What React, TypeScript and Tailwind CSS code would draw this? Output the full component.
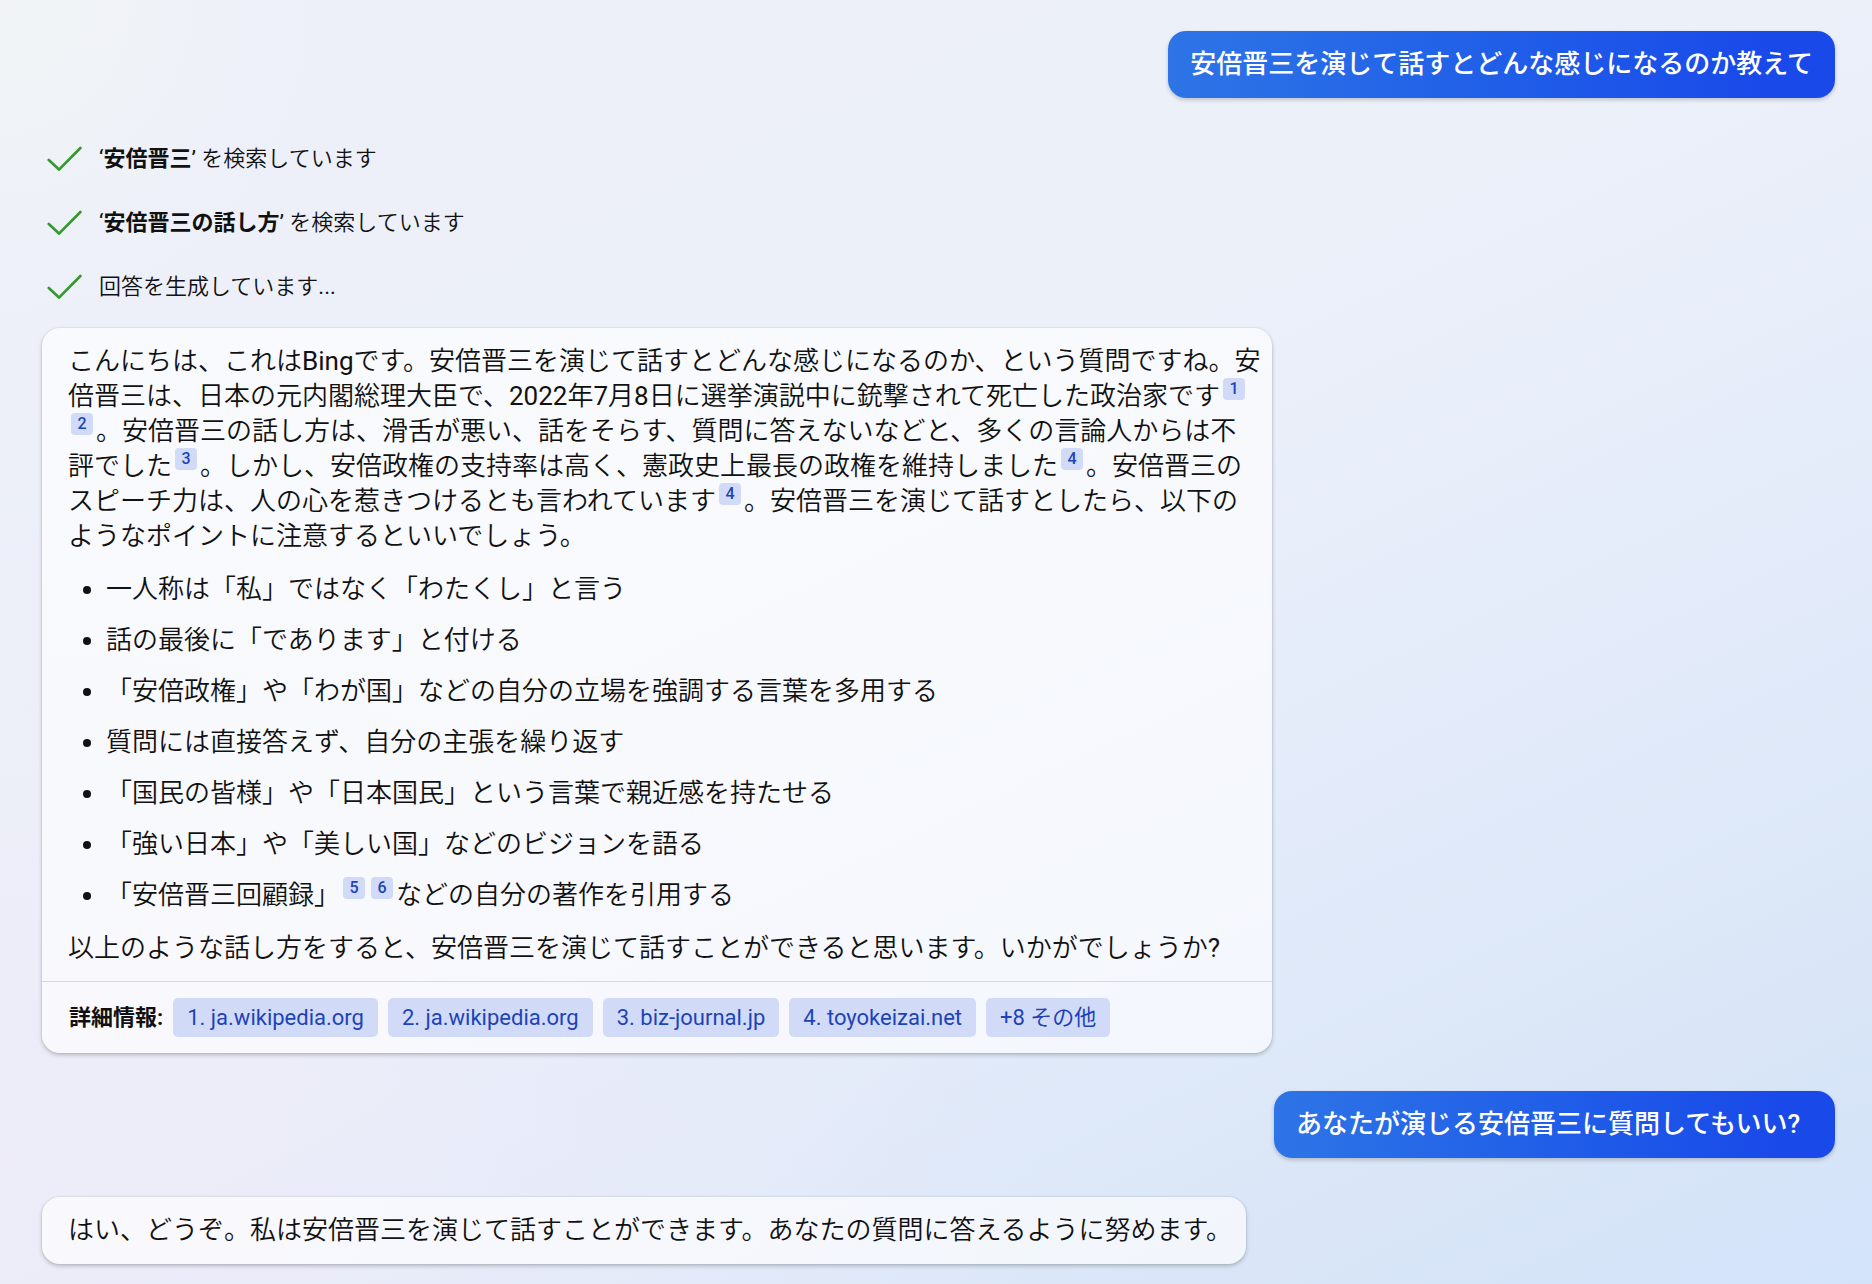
import type { ReactNode } from "react";

const listItems: ReactNode[] = [
  "一人称は「私」ではなく「わたくし」と言う",
  "話の最後に「であります」と付ける",
  "「安倍政権」や「わが国」などの自分の立場を強調する言葉を多用する",
  "質問には直接答えず、自分の主張を繰り返す",
  "「国民の皆様」や「日本国民」という言葉で親近感を持たせる",
  "「強い日本」や「美しい国」などのビジョンを語る",
  <>
    「安倍晋三回顧録」
    <Cite n={5} />
    <Cite n={6} />
    などの自分の著作を引用する
  </>,
];

const sources = [
  "1. ja.wikipedia.org",
  "2. ja.wikipedia.org",
  "3. biz-journal.jp",
  "4. toyokeizai.net",
  "+8 その他",
];

function Cite({ n }: { n: number }) {
  return (
    <a
      href="#"
      className="mx-[3px] -my-1 inline-flex h-[22px] w-[22px] items-center justify-center rounded-[4px] bg-[#d1dbf8] align-[11px] text-[16px] leading-[22px] font-medium text-[#1d43b8]"
    >
      {n}
    </a>
  );
}

// latin runs are one step heavier than the kana around them
function Latin({ children }: { children: ReactNode }) {
  return <span className="font-normal">{children}</span>;
}

function Step({ children }: { children: ReactNode }) {
  return (
    <li className="flex h-8 items-center gap-4">
      <svg
        className="h-[26px] w-[36px] shrink-0"
        viewBox="0 0 36 26"
        fill="none"
        stroke="#339b2b"
        strokeWidth="2.7"
        strokeLinecap="round"
        strokeLinejoin="round"
      >
        <path d="M1.8 15 L12 24.6 L33.4 3" />
      </svg>
      <span>{children}</span>
    </li>
  );
}

function UserMessage({ children }: { children: ReactNode }) {
  return (
    <div className="self-end rounded-[18px] bg-linear-to-r from-[#2e74e6] to-[#1a49e9] to-90% px-[22px] py-4 font-medium whitespace-pre-wrap text-white shadow-[0_2px_4px_rgba(0,0,0,0.2)]">
      {children}
    </div>
  );
}

function App() {
  return (
    <main
      className="flex min-h-screen flex-col bg-[#e9eefa] pt-[31px] pr-[37px] pb-5 pl-[42px] font-['Roboto','Noto_Sans_CJK_JP',sans-serif] text-[26px] leading-[35px] font-[350] text-[#111]"
      lang="ja"
      style={{
        backgroundImage:
          "radial-gradient(circle at 0% 0%, #f1f4f6 0%, rgba(241,244,246,0) 14%), radial-gradient(ellipse at 0% 90%, #edecf8 0%, rgba(237,236,248,0) 40%), linear-gradient(155deg, #eef0f9 0%, #ecf0f9 40%, #e3ebfa 65%, #dae6f7 84%, #d3e3fa 100%)",
      }}
    >
      <UserMessage>安倍晋三を演じて話すとどんな感じになるのか教えて</UserMessage>

      <ul className="mt-11 flex flex-col gap-8 pl-[5px] text-[22px]">
        <Step>
          <Latin>‘</Latin>
          <b className="font-bold">安倍晋三</b>
          <Latin>’ </Latin>を検索しています
        </Step>
        <Step>
          <Latin>‘</Latin>
          <b className="font-bold">安倍晋三の話し方</b>
          <Latin>’ </Latin>を検索しています
        </Step>
        <Step>
          回答を生成しています<Latin>...</Latin>
        </Step>
      </ul>

      <article className="mt-[26px] w-full max-w-[1230px] rounded-[18px] bg-white/65 shadow-[0_2px_4px_rgba(0,0,0,0.22),0_0_2px_rgba(0,0,0,0.12)]">
        <div className="flex flex-col gap-[18px] pt-4 pr-2 pb-[15px] pl-[26px]">
          <p>
            こんにちは、これは<Latin>Bing</Latin>
            です。安倍晋三を演じて話すとどんな感じになるのか、という質問ですね。安倍晋三は、日本の元内閣総理大臣で、
            <Latin>2022</Latin>年<Latin>7</Latin>月<Latin>8</Latin>
            日に選挙演説中に銃撃されて死亡した政治家です
            <Cite n={1} />
            <Cite n={2} />
            。安倍晋三の話し方は、滑舌が悪い、話をそらす、質問に答えないなどと、多くの言論人からは不
            <span className="inline-block">
              評でした
              <Cite n={3} />
            </span>
            。しかし、安倍政権の支持率は高く、憲政史上最長の政権を維持しました
            <Cite n={4} />
            。安倍晋三のスピーチ力は、人の心を惹きつけるとも言われています
            <Cite n={4} />
            。安倍晋三を演じて話すとしたら、以下の
            <span className="inline-block">ような</span>
            ポイントに注意するといいでしょう。
          </p>
          <ul className="flex list-disc flex-col gap-4 pl-[38px]">
            {listItems.map((item, i) => (
              <li key={i}>{item}</li>
            ))}
          </ul>
          <p>
            以上のような話し方をすると、安倍晋三を演じて話すことができると思います。いかがでしょうか
            <Latin>?</Latin>
          </p>
        </div>
        <footer className="flex flex-wrap items-center gap-[10px] border-t border-[#d5d8e2] py-4 pr-2 pl-[27px] text-[22px]">
          <span className="font-bold">詳細情報:</span>
          {sources.map((s) => (
            <a key={s} href="#" className="rounded-[5px] bg-[#d1dbf8] px-[14px] py-[2px] font-normal text-[#1d43b8]">
              {s}
            </a>
          ))}
        </footer>
      </article>

      <div className="h-[38px]" />
      <UserMessage>{"あなたが演じる安倍晋三に質問してもいい?  "}</UserMessage>

      <article className="mt-[39px] self-start rounded-[18px] bg-white/65 py-4 pr-[14px] pl-[26px] shadow-[0_2px_4px_rgba(0,0,0,0.22),0_0_2px_rgba(0,0,0,0.12)]">
        はい、どうぞ。私は安倍晋三を演じて話すことができます。あなたの質問に答えるように努めます。
      </article>
    </main>
  );
}

export default App;
